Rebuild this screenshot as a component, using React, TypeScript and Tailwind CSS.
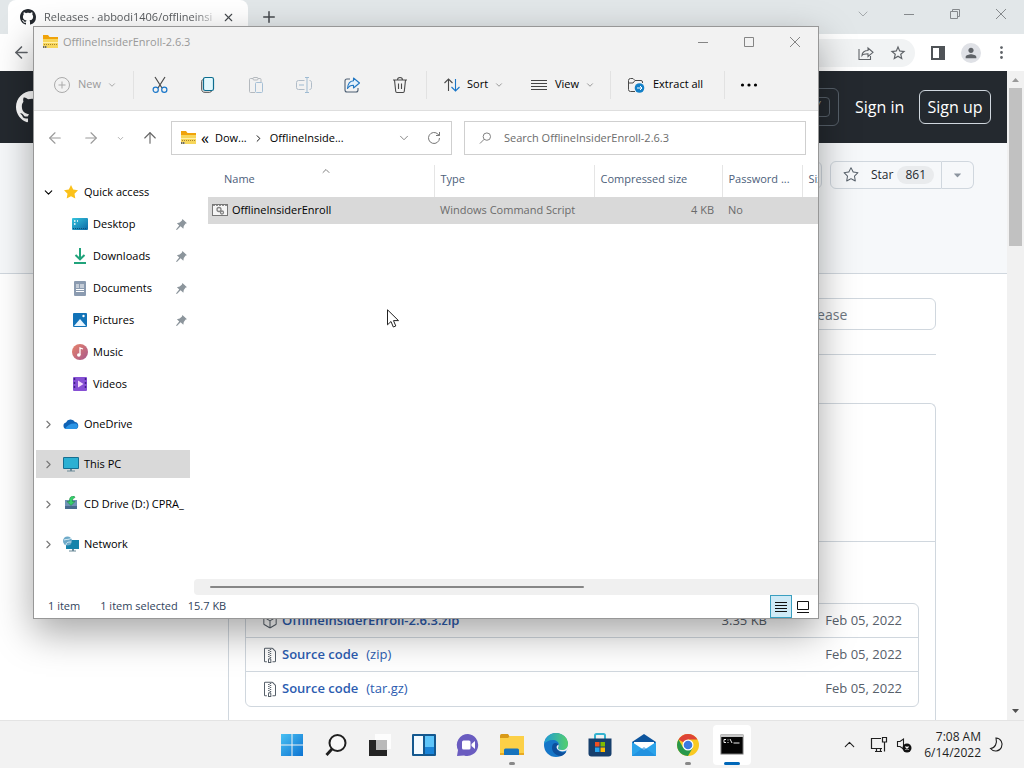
import { ReactNode } from "react";
import { GoFileZip, GoPackage, GoStar, GoTriangleDown } from "react-icons/go";
import { MdPerson, MdStarBorder } from "react-icons/md";
import { ArrowLeft, ArrowRight, ArrowUp, ChevronDown, ChevronRight, ChevronUp, MoreVertical, Plus, X } from "lucide-react";

/* ---------- icons ---------- */

const GithubMark = ({ size }: { size: number }) => (
  <svg width={size} height={size} viewBox="0 0 16 16" fill="currentColor" className="shrink-0">
    <path d="M8 0C3.58 0 0 3.58 0 8c0 3.54 2.29 6.53 5.47 7.59.4.07.55-.17.55-.38 0-.19-.01-.82-.01-1.49-2.01.37-2.53-.49-2.69-.94-.09-.23-.48-.94-.82-1.13-.28-.15-.68-.52-.01-.53.63-.01 1.08.58 1.23.82.72 1.21 1.87.87 2.33.66.07-.52.28-.87.51-1.07-1.78-.2-3.64-.89-3.64-3.95 0-.87.31-1.59.82-2.15-.08-.2-.36-1.02.08-2.12 0 0 .67-.21 2.2.82.64-.18 1.32-.27 2-.27s1.36.09 2 .27c1.53-1.04 2.2-.82 2.2-.82.44 1.1.16 1.92.08 2.12.51.56.82 1.27.82 2.15 0 3.07-1.87 3.75-3.65 3.95.29.25.54.73.54 1.48 0 1.07-.01 1.93-.01 2.2 0 .21.15.46.55.38A8.01 8.01 0 0 0 16 8c0-4.42-3.58-8-8-8z" />
  </svg>
);

const FolderZip = () => (
  <svg width="17" height="16" viewBox="0 0 17 16">
    <path d="M1 1h5l1.5 2H16v4H1z" fill="#f0a30a" />
    <path d="M1 5h15v9H1z" fill="#f7d65a" />
    <path d="M1 8.5h15" stroke="#fff0a8" />
    <path d="M2 10.5h13" stroke="#a8842c" strokeDasharray="1 1" />
    <path d="M1 12h4v2H1z" fill="#6e6a5a" />
    <path d="M2 13h3" stroke="#fff3b5" strokeDasharray="1 1" />
  </svg>
);

const CutIcon = () => (
  <svg width="18" height="18" viewBox="0 0 18 18" fill="none" strokeWidth="1.2">
    <path d="M4 1l7 11M14 1L7 12" stroke="#4a4a4a" />
    <circle cx="4.7" cy="13.8" r="2.6" stroke="#1976c9" />
    <circle cx="13.3" cy="13.8" r="2.6" stroke="#1976c9" />
  </svg>
);

const CopyIcon = () => (
  <svg width="18" height="18" viewBox="0 0 18 18" fill="none">
    <path d="M4 3.5C3 4 2.7 4.5 2.7 5.5V13c0 2.2 1 3.3 3.3 3.3h4.5c1 0 1.7-.4 2-1.3" stroke="#4a4a4a" />
    <rect x="4.5" y="1.5" width="10" height="13" rx="1.8" stroke="#0d6d8f" fill="#e2f8fd" strokeWidth="1.2" />
  </svg>
);

const PasteIcon = () => (
  <svg width="18" height="18" viewBox="0 0 18 18" fill="none" stroke="#b4b9be">
    <path d="M8 16.5H3.5a1 1 0 0 1-1-1v-12a1 1 0 0 1 1-1H6M11 2.5h2a1 1 0 0 1 1 1V6" />
    <rect x="6" y="1.5" width="5" height="2.5" rx="1" />
    <rect x="8.5" y="6.5" width="7" height="10" rx="1" stroke="#a5bfd5" />
  </svg>
);

const RenameIcon = () => (
  <svg width="18" height="18" viewBox="0 0 18 18" fill="none" stroke="#b0bcc8">
    <path d="M9.5 4.5h-6a2 2 0 0 0-2 2v5a2 2 0 0 0 2 2h6M14.5 4.5c1.3 0 2 .7 2 2v5c0 1.3-.7 2-2 2" />
    <path d="M12 2v14M10 1.5h4M10 16.5h4M4 9h5" stroke="#9fbbd2" />
  </svg>
);

const ShareIcon = () => (
  <svg width="18" height="18" viewBox="0 0 18 18" fill="none" stroke="#4d5f73" strokeWidth="1.1">
    <path d="M7 3H4a2 2 0 0 0-2 2v9a2 2 0 0 0 2 2h9a2 2 0 0 0 2-2v-2" />
    <path d="M10.5 2l6 5-6 5V9.3C8 9.3 6 10 4.5 12.5 4.8 8 7 5 10.5 4.7z" stroke="#2277c2" fill="#e3f1fc" strokeLinejoin="round" />
  </svg>
);

const TrashIcon = () => (
  <svg width="18" height="18" viewBox="0 0 18 18" fill="none" stroke="#4a4a4a" strokeWidth="1.1">
    <path d="M2 4h14M6.5 4c0-3.3 5-3.3 5 0M3.5 4l1.2 11.3c.1.8.5 1.2 1.2 1.2h6.2c.7 0 1.1-.4 1.2-1.2L14.5 4M7.5 7.5V13M10.5 7.5V13" />
  </svg>
);

const SortIcon = () => (
  <svg width="18" height="16" viewBox="0 0 18 16" fill="none" strokeWidth="1.1">
    <path d="M5.5 14V2M1.5 6l4-4 4 4" stroke="#4a4a4a" />
    <path d="M12.5 2v12M8.5 10l4 4 4-4" stroke="#1976c9" />
  </svg>
);

const ViewIcon = () => (
  <svg width="16" height="14" viewBox="0 0 16 14" stroke="#444">
    <path d="M0 2.5h16M0 5.5h16M0 8.5h16M0 11.5h16" />
  </svg>
);

const ExtractIcon = () => (
  <svg width="18" height="18" viewBox="0 0 18 18" fill="none">
    <path d="M8 15.5H3.5a2 2 0 0 1-2-2v-9a2 2 0 0 1 2-2H6l2 2h6A1.5 1.5 0 0 1 15.5 6v1M1.5 7H6l2-2.5" stroke="#4a4a4a" />
    <circle cx="12.5" cy="12" r="4.8" fill="#1380c8" />
    <path d="M10 12h5M13 10l2 2-2 2" stroke="#fff" />
  </svg>
);

const SearchGlass = () => (
  <svg width="14" height="14" viewBox="0 0 14 14" fill="none" stroke="#777">
    <circle cx="8.5" cy="5.5" r="4" />
    <path d="M5.6 8.4L1 13" />
  </svg>
);

const RefreshIcon = () => (
  <svg width="14" height="14" viewBox="0 0 14 14" fill="none" stroke="#777">
    <path d="M12.5 7A5.5 5.5 0 1 1 11 3.2l1.5 1.3M12.5 1v3.5H9" />
  </svg>
);

const StarIcon = () => (
  <svg width="16" height="16" viewBox="0 0 16 16">
    <path d="M8 1l2.2 4.5 4.8.7-3.5 3.5.8 4.9L8 12.3l-4.3 2.3.8-4.9L1 6.2l4.8-.7z" fill="#fbc11a" />
  </svg>
);

const DesktopIcon = () => (
  <svg width="16" height="16" viewBox="0 0 16 16">
    <defs>
      <linearGradient id="desk" x1="0" y1="0" x2="1" y2="1">
        <stop stopColor="#36c5dd" />
        <stop offset="1" stopColor="#0a67a6" />
      </linearGradient>
    </defs>
    <rect y="2" width="16" height="12" rx="1" fill="url(#desk)" />
    <path d="M2 5h1.5M2 8h1.5M5 5h1" stroke="#fff" strokeWidth="1.5" />
    <path d="M1 12.5h14" stroke="#0b5078" strokeDasharray="1 1" />
  </svg>
);

const DownloadsIcon = () => (
  <svg width="16" height="16" viewBox="0 0 16 16" fill="none" stroke="#20a37b" strokeWidth="2">
    <path d="M8 0v11M3.5 7L8 11.3 12.5 7M2 15h12" />
  </svg>
);

const DocumentsIcon = () => (
  <svg width="16" height="16" viewBox="0 0 16 16">
    <rect x="2" y="1" width="12" height="15" rx="1" fill="#8b9bb0" />
    <path d="M4 5h3M4 7h3M8 5h4M8 7h4M4 9.5h8M4 11.5h8" stroke="#fff" />
  </svg>
);

const PicturesIcon = () => (
  <svg width="16" height="16" viewBox="0 0 16 16">
    <rect x="1" y="1" width="14" height="14" rx="1" fill="#1273b8" />
    <path d="M2 14l6-7 6 7z" fill="#e9f6ff" />
    <circle cx="11.5" cy="4" r="1.2" fill="#fff" />
  </svg>
);

const MusicIcon = () => (
  <svg width="16" height="16" viewBox="0 0 16 16">
    <defs>
      <linearGradient id="music" x1="0" y1="0" x2="1" y2="1">
        <stop stopColor="#e8836a" />
        <stop offset="1" stopColor="#a7588c" />
      </linearGradient>
    </defs>
    <circle cx="8" cy="8" r="8" fill="url(#music)" />
    <path d="M8 11V4l3 1" stroke="#fff" strokeWidth="1.3" fill="none" />
    <circle cx="6.8" cy="11" r="1.8" fill="#fff" />
  </svg>
);

const VideosIcon = () => (
  <svg width="16" height="16" viewBox="0 0 16 16">
    <rect x="1" y="1" width="14" height="14" rx="1" fill="#8650d4" />
    <path d="M2.5 2v12M13.5 2v12" stroke="#40208a" strokeWidth="1.5" strokeDasharray="2 2" />
    <path d="M6 4.5L11.5 8 6 11.5z" fill="#f2d9fb" />
  </svg>
);

const OneDriveIcon = () => (
  <svg width="16" height="16" viewBox="0 0 16 16">
    <path d="M3.5 13A3.3 3.3 0 0 1 3 6.5 5 5 0 0 1 12 6a3.6 3.6 0 0 1 .8 7z" fill="#0f62b5" />
    <path d="M2 13c2-4 6-6 11-5.500a3 3 0 0 1 0 5.500z" fill="#2a94e6" />
  </svg>
);

const PcIcon = () => (
  <svg width="16" height="16" viewBox="0 0 16 16">
    <rect y="1" width="16" height="12" rx="1" fill="#166e91" />
    <rect x="1" y="2" width="14" height="10" fill="#2cb0d3" />
    <path d="M7 13h2v1.500h3v1H4v-1h3z" fill="#6b8998" />
  </svg>
);

const CdIcon = () => (
  <svg width="16" height="16" viewBox="0 0 16 16">
    <path d="M2 4h12v9H2z" fill="#6f92b5" />
    <path d="M2 10h12v3H2z" fill="#486b8e" />
    <path d="M11 0C6 0 6.500 4 6.500 5.500H4l4 4 4-4H9.500c0-2 0-3 2.500-4z" fill="#36d06a" stroke="#147a3e" strokeWidth=".5" />
  </svg>
);

const NetworkIcon = () => (
  <svg width="16" height="16" viewBox="0 0 16 16">
    <rect x="3" y="4" width="13" height="9" fill="#1683aa" />
    <path d="M9 13h2v1.500h2v1H6v-1h3z" fill="#6b8998" />
    <circle cx="4.5" cy="5" r="4.5" fill="#6da9c8" />
    <path d="M1 4c3-1 5 0 7-2M3 9c0-3 3-3 5-3" stroke="#d7edf5" fill="none" />
  </svg>
);

const PinIcon = () => (
  <svg width="11" height="11" viewBox="0 0 12 12" fill="#8c959c">
    <path d="M7 0l5 4.5-1.5.5-2 2.5-.5 3L5 8l-4 4-1-.5L3.500 7 1 4.500l3-.6L6.500 1.500z" />
  </svg>
);

const ScriptIcon = () => (
  <svg width="16" height="13" viewBox="0 0 16 13">
    <rect x=".5" y=".5" width="15" height="11" fill="#f5f5f5" stroke="#777" />
    <path d="M1 1.500h14" stroke="#8d8d8d" strokeDasharray="2 1" />
    <circle cx="7" cy="5.5" r="2" fill="none" stroke="#838383" strokeWidth="1.3" />
    <circle cx="10" cy="8.5" r="1.5" fill="none" stroke="#838383" strokeWidth="1.3" />
  </svg>
);

/* ---------- browser ---------- */

const WindowButton = ({ label, children }: { label: string; children: ReactNode }) => (
  <button aria-label={label} className="flex w-[46px] items-center justify-center">
    <svg width="10" height="10" viewBox="0 0 10 10" fill="none" stroke="currentColor" overflow="visible">{children}</svg>
  </button>
);

const TabStrip = () => (
  <div className="flex h-[34px] shrink-0 bg-[#e2e7e9] pl-2">
    <div className="flex w-60 items-center rounded-t-lg bg-white px-3 text-[#24292f]">
      <GithubMark size={16} />
      <span className="ml-2 flex-1 overflow-hidden whitespace-nowrap text-[11px] text-[#5a5d60] [mask-image:linear-gradient(to_right,black_85%,transparent)]">
        Releases · abbodi1406/offlineinsi
      </span>
      <button aria-label="Close tab" className="flex w-4 justify-center text-[#45494d]">
        <X size={13} />
      </button>
    </div>
    <button aria-label="New tab" className="ml-3 text-[#45494d]">
      <Plus size={18} />
    </button>
    <div className="ml-auto flex h-7 text-[#85898c]">
      <button aria-label="Tab search" className="flex w-[46px] items-center justify-center">
        <ChevronDown size={16} strokeWidth={1} />
      </button>
      <WindowButton label="Minimize"><path d="M0 5.500h10" /></WindowButton>
      <WindowButton label="Restore"><path d="M.5 2.500h7v7h-7zM2.500 2.500v-2h7v7h-2" /></WindowButton>
      <WindowButton label="Close"><path d="M0 0l10 10M10 0L0 10" /></WindowButton>
    </div>
  </div>
);

const Toolbar = () => (
  <div className="flex h-[37px] shrink-0 items-center bg-white pl-3 pr-3.5 text-[#5f6368]">
    <button aria-label="Back"><ArrowLeft size={19} /></button>
    <div className="ml-4 flex h-7 flex-1 items-center justify-end gap-3.5 rounded-full bg-[#f1f3f4] pr-2">
      <button aria-label="Share">
        <svg width="18" height="18" viewBox="0 0 18 18" fill="none" stroke="currentColor" strokeWidth="1.1">
          <path d="M2 5v10.500h11.500V12M5 11.500C5 8 8 6.500 11 6.500V4l5 4.300-5 4.200V9.700c-3 0-5 .3-6 1.800z" />
        </svg>
      </button>
      <button aria-label="Bookmark"><MdStarBorder size={18} /></button>
    </div>
    <button aria-label="Side panel" className="ml-4">
      <svg width="14" height="14" viewBox="0 0 14 14"><path d="M0 0h14v14H0zM2 2v10h6V2z" fillRule="evenodd" fill="#4f5357" /></svg>
    </button>
    <button aria-label="Profile" className="ml-4 flex size-5 items-center justify-center rounded-full bg-[#dfe1e6]">
      <MdPerson size={16} />
    </button>
    <button aria-label="Menu" className="ml-3"><MoreVertical size={17} fill="currentColor" /></button>
  </div>
);

const GithubHeader = () => (
  <header className="flex h-[72px] items-center bg-[#24292f] px-4 text-base text-white">
    <GithubMark size={32} />
    <div className="ml-4 flex h-[38px] flex-1 items-center justify-end rounded-md border border-[#57606a] pr-2">
      <kbd className="flex h-5 w-6 items-center justify-center rounded-sm border border-[#57606a] text-xs text-[#8c959f]">/</kbd>
    </div>
    <a href="#signin" className="ml-4 w-16">Sign in</a>
    <a href="#signup" className="flex h-[34px] w-[72px] items-center justify-center whitespace-nowrap rounded-md border border-[#d0d7de]">Sign up</a>
  </header>
);

const assets = [
  { name: "OfflineInsiderEnroll-2.6.3.zip", ext: "", size: "3.35 KB", icon: <GoPackage size={16} /> },
  { name: "Source code", ext: "(zip)", size: "", icon: <GoFileZip size={16} /> },
  { name: "Source code", ext: "(tar.gz)", size: "", icon: <GoFileZip size={16} /> },
];

const Release = () => (
  <section className="ml-[228px] mt-12 flex-1 rounded-t-md border border-b-0 border-[#d0d7de]">
    <div className="h-[138px] border-b border-[#d0d7de]" />
    <ul className="mx-4 mt-[61px] divide-y divide-[#d0d7de] rounded-md border border-[#d0d7de] text-[13px]">
      {assets.map((asset) => (
        <li key={asset.name + asset.ext} className="flex h-[34px] items-center px-4 text-[#57606a]">
          {asset.icon}
          <a href="#download" className="ml-1 flex-1 text-[#2c5cb0]">
            <span className="mr-2 font-semibold">{asset.name}</span>
            {asset.ext}
          </a>
          <span>{asset.size}</span>
          <time className="w-[135px] text-right">Feb 05, 2022</time>
        </li>
      ))}
    </ul>
  </section>
);

const GithubPage = () => (
  <div className="flex min-w-0 flex-1 flex-col bg-white">
    <GithubHeader />
    <div className="flex h-[131px] shrink-0 justify-end border-b border-[#d0d7de] bg-[#f6f8fa] pr-[33px] pt-[18px]">
      <button aria-label="Fork" className="h-7 w-20 rounded-md border border-[#d0d7de]" />
      <button className="ml-2 flex h-7 w-28 items-center rounded-l-md border border-[#d0d7de] pl-3 text-xs font-medium text-[#24292f]">
        <GoStar size={16} className="text-[#57606a]" />
        <span className="ml-3">Star</span>
        <span className="ml-1 rounded-full bg-[#e9ebed] px-2 py-px">861</span>
      </button>
      <button aria-label="Add to list" className="flex h-7 w-8 items-center justify-center rounded-r-md border border-l-0 border-[#d0d7de] text-[#8c959f]">
        <GoTriangleDown size={13} />
      </button>
    </div>
    <main className="flex min-h-0 flex-1 flex-col pr-[71px] pt-6">
      <input
        aria-label="Find a release"
        placeholder="Find a release"
        className="ml-auto h-8 w-56 shrink-0 rounded-md border border-[#d0d7de] pl-11 text-sm placeholder:text-[#6e7781]"
      />
      <hr className="ml-20 mt-6 border-[#d0d7de]" />
      <Release />
    </main>
  </div>
);

const PageScrollbar = () => (
  <div className="flex w-[17px] shrink-0 flex-col items-center bg-[#f1f1f1]">
    <svg width="17" height="17" viewBox="0 0 17 17"><path d="M5 11l3.500-4 3.500 4z" fill="#9a9a9a" /></svg>
    <div className="h-[158px] w-[13px] bg-[#c1c1c1]" />
    <svg className="mt-auto" width="17" height="17" viewBox="0 0 17 17"><path d="M5 6l3.500 4L12 6z" fill="#505050" /></svg>
  </div>
);

/* ---------- explorer ---------- */

const Divider = () => <div className="h-7 w-px bg-[#e2e2e2]" />;

const actions = [
  { label: "Cut", icon: <CutIcon /> },
  { label: "Copy", icon: <CopyIcon /> },
  { label: "Paste", icon: <PasteIcon /> },
  { label: "Rename", icon: <RenameIcon /> },
  { label: "Share", icon: <ShareIcon /> },
  { label: "Delete", icon: <TrashIcon /> },
];

const CommandBar = () => (
  <div className="flex h-[54px] shrink-0 items-center border-b border-[#dedede] bg-[#f2f2f2] pt-0.5">
    <button className="flex w-[99px] items-center pl-5 text-[#9a9a9a]">
      <svg width="16" height="16" viewBox="0 0 16 16" fill="none" stroke="#aaa"><circle cx="8" cy="8" r="7.5" /><path d="M8 4.500v7M4.500 8h7" /></svg>
      <span className="ml-2">New</span>
      <ChevronDown size={10} className="ml-1.5" />
    </button>
    <Divider />
    <div className="mx-0.5 flex">
      {actions.map((a) => (
        <button key={a.label} aria-label={a.label} className="flex w-12 justify-center">{a.icon}</button>
      ))}
    </div>
    <Divider />
    <button className="flex w-[92px] items-center pl-4">
      <SortIcon />
      <span className="ml-1.5 mr-1.5">Sort</span>
      <ChevronDown size={10} className="text-[#888]" />
    </button>
    <button className="flex w-[91px] items-center pl-3">
      <ViewIcon />
      <span className="ml-2 mr-1.5">View</span>
      <ChevronDown size={10} className="text-[#888]" />
    </button>
    <Divider />
    <button className="flex w-[113px] items-center whitespace-nowrap pl-4">
      <ExtractIcon />
      <span className="ml-2">Extract all</span>
    </button>
    <Divider />
    <button aria-label="See more" className="w-12">
      <svg className="mx-auto" width="18" height="4" viewBox="0 0 18 4"><circle cx="2.5" cy="2" r="1.6" /><circle cx="9" cy="2" r="1.6" /><circle cx="15.5" cy="2" r="1.6" /></svg>
    </button>
  </div>
);

const AddressBar = () => (
  <div className="flex h-[54px] shrink-0 items-center pr-3">
    <div className="flex w-[137px] items-center pl-3 text-[#9a9a9a]">
      <button aria-label="Back"><ArrowLeft size={18} strokeWidth={1.5} /></button>
      <button aria-label="Forward" className="ml-[18px]"><ArrowRight size={18} strokeWidth={1.5} /></button>
      <button aria-label="Recent" className="ml-4"><ChevronDown size={9} /></button>
      <button aria-label="Up" className="ml-4 text-[#666]"><ArrowUp size={18} strokeWidth={1.5} /></button>
    </div>
    <nav className="flex h-[34px] w-[281px] items-center border border-[#cfcfcf] pl-2">
      <FolderZip />
      <span className="ml-1 text-base leading-4">«</span>
      <button className="ml-1.5">Dow...</button>
      <ChevronRight size={11} className="mx-1.5" />
      <button>OfflineInside...</button>
      <button aria-label="Previous locations" className="ml-auto mr-4 text-[#777]"><ChevronDown size={14} strokeWidth={1.5} /></button>
      <button aria-label="Refresh" className="mr-2.5"><RefreshIcon /></button>
    </nav>
    <label className="ml-3 flex h-[34px] flex-1 items-center border border-[#cfcfcf] pl-3.5">
      <SearchGlass />
      <input aria-label="Search folder" placeholder="Search OfflineInsiderEnroll-2.6.3" className="ml-3 w-full placeholder:text-[#6b6b6b]" />
    </label>
  </div>
);

const quickAccess = [
  { label: "Desktop", icon: <DesktopIcon />, pinned: true },
  { label: "Downloads", icon: <DownloadsIcon />, pinned: true },
  { label: "Documents", icon: <DocumentsIcon />, pinned: true },
  { label: "Pictures", icon: <PicturesIcon />, pinned: true },
  { label: "Music", icon: <MusicIcon />, pinned: false },
  { label: "Videos", icon: <VideosIcon />, pinned: false },
];

const roots = [
  { label: "OneDrive", icon: <OneDriveIcon /> },
  { label: "This PC", icon: <PcIcon />, selected: true },
  { label: "CD Drive (D:) CPRA_", icon: <CdIcon /> },
  { label: "Network", icon: <NetworkIcon /> },
];

const Sidebar = () => (
  <aside className="w-40 shrink-0 pl-0.5 pr-1 pt-[13px]">
    <button className="flex h-7 w-full items-center pl-1.5">
      <ChevronDown size={13} className="mr-2" />
      <StarIcon />
      <span className="ml-[5px]">Quick access</span>
    </button>
    <ul className="mt-1 space-y-1">
      {quickAccess.map((item) => (
        <li key={item.label}>
          <button className="flex h-7 w-full items-center pl-9 pr-[3px]">
            {item.icon}
            <span className="ml-[5px] mr-auto">{item.label}</span>
            {item.pinned && <PinIcon />}
          </button>
        </li>
      ))}
    </ul>
    <ul className="mt-3 space-y-3">
      {roots.map((item) => (
        <li key={item.label}>
          <button className={`flex h-7 w-full items-center whitespace-nowrap pl-1.5 ${item.selected ? "bg-[#d9d9d9]" : ""}`}>
            <ChevronRight size={13} className="mr-2 shrink-0 text-[#777]" />
            <span className="shrink-0">{item.icon}</span>
            <span className="ml-[5px]">{item.label}</span>
          </button>
        </li>
      ))}
    </ul>
  </aside>
);

const FileList = () => (
  <div className="flex min-w-0 flex-1 flex-col">
    <div className="flex-1 overflow-hidden pl-3.5">
      <table className="w-full table-fixed text-left">
        <colgroup>
          <col className="w-[226px]" />
          <col className="w-40" />
          <col className="w-32" />
          <col className="w-20" />
          <col />
        </colgroup>
        <thead>
          <tr className="h-8 text-[#4c607a]">
            <th className="relative border-r border-[#e5e5e5] pb-1 pl-4 font-normal">
              Name
              <ChevronUp size={12} className="absolute left-28 top-0 text-[#555]" strokeWidth={1.5} />
            </th>
            <th className="border-r border-[#e5e5e5] pb-1 pl-1.5 font-normal">Type</th>
            <th className="whitespace-nowrap border-r border-[#e5e5e5] pb-1 pl-1.5 font-normal">Compressed size</th>
            <th className="whitespace-nowrap border-r border-[#e5e5e5] pb-1 pl-1.5 font-normal">Password ...</th>
            <th className="overflow-hidden whitespace-nowrap pb-1 pl-1.5 font-normal">Size</th>
          </tr>
        </thead>
        <tbody>
          <tr className="h-[27px] bg-[#d9d9d9] text-[#6b6b6b]">
            <td className="text-black">
              <div className="flex items-center gap-1 pl-1">
                <ScriptIcon />
                OfflineInsiderEnroll
              </div>
            </td>
            <td className="pl-1.5">Windows Command Script</td>
            <td className="pr-2 text-right">4 KB</td>
            <td className="pl-1.5">No</td>
            <td />
          </tr>
        </tbody>
      </table>
    </div>
    <div className="flex h-4 shrink-0 items-center rounded-l bg-[#f0f0f0] pl-4">
      <div className="h-0.5 w-[374px] rounded-full bg-[#868686]" />
    </div>
  </div>
);

const StatusBar = () => (
  <div className="flex h-[23px] shrink-0 items-center pl-3.5 pr-1 text-[#31435c]">
    <span>1 item</span>
    <span className="ml-5">1 item selected</span>
    <span className="ml-2.5">15.7 KB</span>
    <button aria-label="Details view" className="ml-auto flex h-[23px] w-[22px] items-center justify-center border border-[#3a9fc0] bg-[#cfeaf6]">
      <svg width="12" height="12" viewBox="0 0 12 12" stroke="#111"><path d="M0 1.500h12M0 4.500h12M0 7.500h12M0 10.500h12" /></svg>
    </button>
    <button aria-label="Large icons view" className="flex w-[22px] justify-center">
      <svg width="12" height="12" viewBox="0 0 12 12" fill="none" stroke="#111"><path d="M.5.5h11v8H.5zM0 11.500h12" /></svg>
    </button>
  </div>
);

const Explorer = () => (
  <div className="absolute left-[33px] top-[26px] flex h-[593px] w-[786px] flex-col border border-[#979797] bg-white text-[11px] shadow-[0_14px_36px_rgba(0,0,0,0.35)]">
    <div className="flex h-[30px] shrink-0 bg-[#f2f2f2] text-[#858585]">
      <div className="flex items-center pl-2 text-[#999]">
        <FolderZip />
        <span className="ml-1">OfflineInsiderEnroll-2.6.3</span>
      </div>
      <div className="ml-auto flex">
        <WindowButton label="Minimize window"><path d="M0 5.500h10" /></WindowButton>
        <WindowButton label="Maximize window"><path d="M.5.5h9v9h-9z" /></WindowButton>
        <WindowButton label="Close window"><path d="M0 0l10 10M10 0L0 10" /></WindowButton>
      </div>
    </div>
    <CommandBar />
    <AddressBar />
    <div className="flex min-h-0 flex-1">
      <Sidebar />
      <FileList />
    </div>
    <StatusBar />
  </div>
);

/* ---------- taskbar ---------- */

const StartLogo = () => (
  <svg width="24" height="24" viewBox="0 0 24 24">
    <defs>
      <linearGradient id="start" x1="0" y1="0" x2="24" y2="24" gradientUnits="userSpaceOnUse">
        <stop stopColor="#4cc4f4" />
        <stop offset="1" stopColor="#0a6fd0" />
      </linearGradient>
    </defs>
    <path d="M1 1h10.500v10.500H1zM12.500 1H23v10.500H12.500zM1 12.500h10.500V23H1zM12.500 12.500H23V23H12.500z" fill="url(#start)" />
  </svg>
);

const SearchLogo = () => (
  <svg width="24" height="24" viewBox="0 0 24 24" stroke="#1f1f1f" fill="none">
    <circle cx="13.5" cy="10" r="8" strokeWidth="2" fill="#f8f8f8" />
    <path d="M8 16l-5.500 6" strokeWidth="2.8" />
  </svg>
);

const TaskViewLogo = () => (
  <svg width="24" height="24" viewBox="0 0 24 24">
    <path d="M7 1h16v15H7z" fill="#fff" opacity=".8" />
    <path d="M1 7h18v16H1z" fill="#242424" />
    <path d="M8 7h11v10H8z" fill="#b9b9b9" />
  </svg>
);

const WidgetsLogo = () => (
  <svg width="26" height="24" viewBox="0 0 26 24">
    <rect x="1" y="1" width="24" height="22" rx="1" fill="#14588f" />
    <path d="M3 3h9v18H3z" fill="#f3faff" />
    <path d="M14 3h9v11h-9z" fill="#5ec5fa" />
    <path d="M14 14h9v7h-9z" fill="#1a84d8" />
  </svg>
);

const ChatLogo = () => (
  <svg width="24" height="24" viewBox="0 0 24 24">
    <path d="M12 1a11 11 0 1 1-4 21.500L1 23l1-6A11 11 0 0 1 12 1z" fill="#6a5cc0" />
    <rect x="6" y="7.5" width="8.5" height="9" rx="1.5" fill="#fff" />
    <path d="M15.500 11l3.500-3v8l-3.500-3z" fill="#fff" />
  </svg>
);

const FolderLogo = () => (
  <svg width="26" height="24" viewBox="0 0 26 24">
    <path d="M1 2.500Q1 1 2.500 1H9l2 3v4H1z" fill="#d99a18" />
    <path d="M1 5h8l2-2h14v19H1z" fill="#fcd047" />
    <path d="M5 22v-5q0-1.500 1.500-1.500h12q1.500 0 1.500 1.500v5z" fill="#1673bd" />
    <path d="M1 20h4v2H1zM20 20h5v2h-5z" fill="#e8aa24" />
  </svg>
);

const EdgeLogo = () => (
  <svg width="26" height="26" viewBox="0 0 26 26">
    <defs>
      <linearGradient id="edge" x1="0" y1="0" x2="1" y2="0">
        <stop stopColor="#1f9bd7" />
        <stop offset="1" stopColor="#55d06c" />
      </linearGradient>
    </defs>
    <circle cx="13" cy="13" r="12" fill="#1576c8" />
    <path d="M1 12C2 5 7 1 13 1c7 0 12 5 12 11 0 4-3 6-6 6-3 0-4-1-4-2 0-.7 1-1 1-3 0-3-3-5-6-5-4 0-7.500 2-9 4z" fill="url(#edge)" />
    <path d="M10 12c-3 5 1 12 8 12 2-.5 4-2 5.500-4.500-4 2-9 .5-9.500-3.500-.1-1 1.300-1.500 1.300-3.200C15 11 12 10 10 12z" fill="#0d4f9b" />
    <path d="M15.500 12.500c-2 1-2.500 3-1.300 4.500 2 2.700 6 3 9 1.500.5 0 .7.500.3 1l-.8 1C25 17 26 15 25 12c0 4-3 6-6 6-3 0-4-1-4-2 0-.7 1-1 .5-3.500z" fill="#f2f2f2" />
  </svg>
);

const StoreLogo = () => (
  <svg width="26" height="26" viewBox="0 0 26 26">
    <path d="M8 7V3.500Q8 2 9.500 2h7Q18 2 18 3.500V7" fill="none" stroke="#35b3d0" strokeWidth="2" />
    <path d="M1.500 6.500h23v15q0 3-3 3h-17q-3 0-3-3z" fill="#173f6c" />
    <path d="M8 10h4.500v4.500H8z" fill="#f25022" />
    <path d="M13.500 10H18v4.500h-4.500z" fill="#7fba00" />
    <path d="M8 15.500h4.500V20H8z" fill="#27a5ef" />
    <path d="M13.500 15.500H18V20h-4.500z" fill="#ffb900" />
  </svg>
);

const MailLogo = () => (
  <svg width="26" height="24" viewBox="0 0 26 24">
    <path d="M1 9l12-8 12 8v5H1z" fill="#0c549d" />
    <path d="M3 9h20v8H3z" fill="#fff" />
    <path d="M1 9l12 8L25 9v14H1z" fill="#2ba3ea" />
    <path d="M1 23l12-9 12 9z" fill="#1d87d8" opacity=".6" />
  </svg>
);

const ChromeLogo = () => (
  <svg width="24" height="24" viewBox="0 0 24 24">
    <circle cx="12" cy="12" r="11" fill="#f9c921" />
    <path d="M12 12L2.500 6.500A11 11 0 0 1 21.500 6.500H12z" fill="#de4437" />
    <path d="M2.500 6.500A11 11 0 0 0 12 23l4.800-8.300L12 12 7.200 14.700z" fill="#27984b" />
    <circle cx="12" cy="12" r="5.5" fill="#fff" />
    <circle cx="12" cy="12" r="4.3" fill="#3a7ae0" />
  </svg>
);

const CmdLogo = () => (
  <svg width="24" height="22" viewBox="0 0 24 22">
    <rect x="1" y="1" width="22" height="19" fill="#050505" stroke="#777" />
    <path d="M1 2h22" stroke="#c8c8c8" strokeWidth="2" />
    <path d="M6 5.500H4v3h2M8 5.500v1M8 8v1M10 5l2 4M13.500 9h6" stroke="#eee" fill="none" />
  </svg>
);

const apps = [
  { label: "Start", icon: <StartLogo /> },
  { label: "Search", icon: <SearchLogo /> },
  { label: "Task view", icon: <TaskViewLogo /> },
  { label: "Widgets", icon: <WidgetsLogo /> },
  { label: "Chat", icon: <ChatLogo /> },
  { label: "File Explorer", icon: <FolderLogo />, running: true },
  { label: "Edge", icon: <EdgeLogo /> },
  { label: "Microsoft Store", icon: <StoreLogo /> },
  { label: "Mail", icon: <MailLogo /> },
  { label: "Chrome", icon: <ChromeLogo />, running: true },
  { label: "Command Prompt", icon: <CmdLogo />, active: true },
];

const Taskbar = () => (
  <footer className="relative grid h-12 shrink-0 grid-cols-[1fr_auto_1fr] items-center border-t border-[#e4e4e4] bg-[#f2f2f2]">
    <div />
    <div className="flex">
      {apps.map((app) => (
        <button key={app.label} aria-label={app.label} className="relative flex h-11 w-11 items-center justify-center">
          <span className={`flex h-10 w-[38px] items-center justify-center rounded ${app.active ? "bg-white" : ""}`}>{app.icon}</span>
          {app.running && <span className="absolute bottom-0.5 h-[3px] w-1.5 rounded-full bg-[#888]" />}
          {app.active && <span className="absolute bottom-0.5 h-[3px] w-4 rounded-full bg-[#0067b8]" />}
        </button>
      ))}
    </div>
    <div className="flex items-center justify-end pr-5 text-[#1f1f1f]">
      <button aria-label="Show hidden icons" className="mr-3"><ChevronUp size={17} strokeWidth={1.5} /></button>
      <button aria-label="Network" className="mr-2">
        <svg width="18" height="18" viewBox="0 0 18 18" fill="none" stroke="currentColor">
          <path d="M11 2.500H1.500v10H12M5 15.500h7M6.500 12.500v3M10.500 12.500v3M12.500 1.500h4V6h-4zM14.500 6v9.500" strokeWidth="1.2" />
        </svg>
      </button>
      <button aria-label="Volume muted" className="mr-3">
        <svg width="16" height="16" viewBox="0 0 16 16" fill="none" stroke="currentColor">
          <path d="M7.500 2v10L4 9.500H1.500v-5H4z" strokeWidth="1.1" />
          <circle cx="11" cy="11" r="4.5" fill="#111" stroke="none" />
          <path d="M9.500 9.500l3 3M12.500 9.500l-3 3" stroke="#fff" strokeWidth="1.2" />
        </svg>
      </button>
      <button className="mr-2 text-right text-xs leading-4">
        7:08 AM
        <br />
        6/14/2022
      </button>
      <button aria-label="Focus assist">
        <svg width="15" height="15" viewBox="0 0 15 15" fill="none" stroke="currentColor" strokeWidth="1.1">
          <path d="M7 1a6.500 6.500 0 1 1-5.500 10.500C6 11 8.500 6.500 7 1z" />
        </svg>
      </button>
    </div>
  </footer>
);

export default function App() {
  return (
    <div className="relative flex h-screen flex-col overflow-hidden font-['Open_Sans','Noto_Sans',sans-serif]">
      <TabStrip />
      <Toolbar />
      <div className="flex min-h-0 flex-1 overflow-hidden">
        <GithubPage />
        <PageScrollbar />
      </div>
      <Explorer />
      <Taskbar />
      <svg className="absolute left-[387px] top-[309px]" width="12" height="19" viewBox="0 0 12 19">
        <path d="M.5.800v15l3.500-3.300 2.300 5.500 2.500-1-2.300-5.400h5z" fill="#fff" stroke="#222" />
      </svg>
    </div>
  );
}
